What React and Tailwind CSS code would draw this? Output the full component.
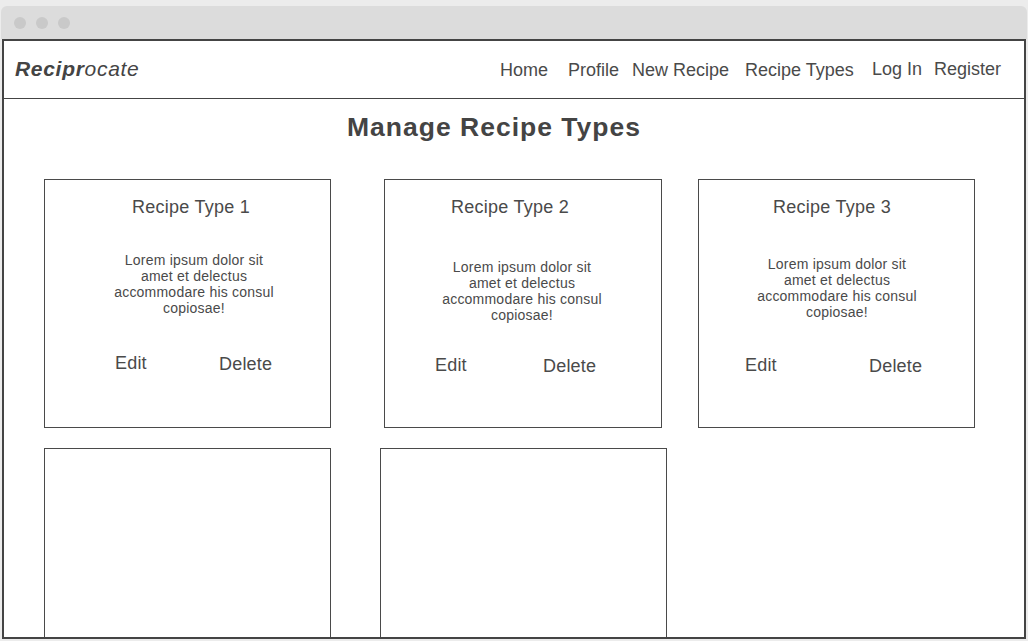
import React from "react";

const font = { fontFamily: '"Liberation Sans", Arial, sans-serif' };

function Card({ title, titleMl, loremMl, loremMt, actMt, editMl, editW, delMt = 1, w }) {
  return (
    <div className={`${w} h-[249px] shrink-0 border border-[#4a4a4a] bg-white flex flex-col`}>
      <div className="pt-[17px] text-[18px] leading-[20px] tracking-[0.25px] text-[#4a4a4a]" style={{ marginLeft: titleMl }}>
        {title}
      </div>
      <div
        className="w-[176px] text-center text-[14px] leading-[16px] tracking-[0.22px] text-[#4a4a4a]"
        style={{ marginLeft: loremMl, marginTop: loremMt }}
      >
        Lorem ipsum dolor sit
        <br />
        amet et delectus
        <br />
        accommodare his consul
        <br />
        copiosae!
      </div>
      <div className="flex items-start text-[18px] leading-[20px] tracking-[0.2px] text-[#4a4a4a]" style={{ marginTop: actMt, marginLeft: editMl }}>
        <span style={{ width: editW }}>Edit</span>
        <span style={{ marginTop: delMt }}>Delete</span>
      </div>
    </div>
  );
}

export default function App() {
  return (
    <div className="w-[1028px] h-[641px] bg-[#ececec] pt-[6px] overflow-hidden" style={font}>
      <div className="ml-[1px] w-[1026px] h-[33px] rounded-t-[6px] bg-[#dcdcdc] flex items-center gap-[10px] pl-[13px]">
        <div className="w-[12px] h-[12px] rounded-full bg-[#c9c9c9]" />
        <div className="w-[12px] h-[12px] rounded-full bg-[#c9c9c9]" />
        <div className="w-[12px] h-[12px] rounded-full bg-[#c9c9c9]" />
      </div>
      <div className="ml-[2px] w-[1024px] h-[600px] border-2 border-[#444] bg-white overflow-hidden flex flex-col">
        <nav className="h-[58px] shrink-0 border-b border-[#444] flex items-start">
          <div className="pt-[17px] ml-[11px] text-[21px] leading-[21px] tracking-[0.7px] italic text-[#444]">
            <span className="font-bold">Recipr</span>ocate
          </div>
          <div className="ml-auto flex items-start text-[18px] leading-[18px] text-[#4a4a4a] pt-[20px] mr-[23px]">
            <span className="w-[68px]">Home</span>
            <span className="w-[64px]">Profile</span>
            <span className="w-[113px]">New Recipe</span>
            <span className="w-[127px]">Recipe Types</span>
            <span className="w-[62px] -mt-[1px]">Log In</span>
            <span className="-mt-[1px]">Register</span>
          </div>
        </nav>
        <h1 className="mt-[15px] ml-[343px] text-[26.5px] leading-[26px] tracking-[1px] font-bold text-[#444]">Manage Recipe Types</h1>
        <div className="mt-[39px] ml-[40px] flex items-start">
          <Card w="w-[287px]" title="Recipe Type 1" titleMl={87} loremMl={61} loremMt={35} actMt={37} editMl={70} editW={104} />
          <div className="w-[53px] shrink-0" />
          <Card w="w-[278px]" title="Recipe Type 2" titleMl={66} loremMl={49} loremMt={42} actMt={32} editMl={50} editW={108} />
          <div className="w-[36px] shrink-0" />
          <Card w="w-[277px]" title="Recipe Type 3" titleMl={74} loremMl={50} loremMt={39} actMt={35} editMl={46} editW={124} />
        </div>
        <div className="mt-[20px] ml-[40px] flex items-start gap-[49px]">
          <div className="w-[287px] h-[249px] shrink-0 border border-[#4a4a4a]" />
          <div className="w-[287px] h-[249px] shrink-0 border border-[#4a4a4a]" />
        </div>
      </div>
    </div>
  );
}
